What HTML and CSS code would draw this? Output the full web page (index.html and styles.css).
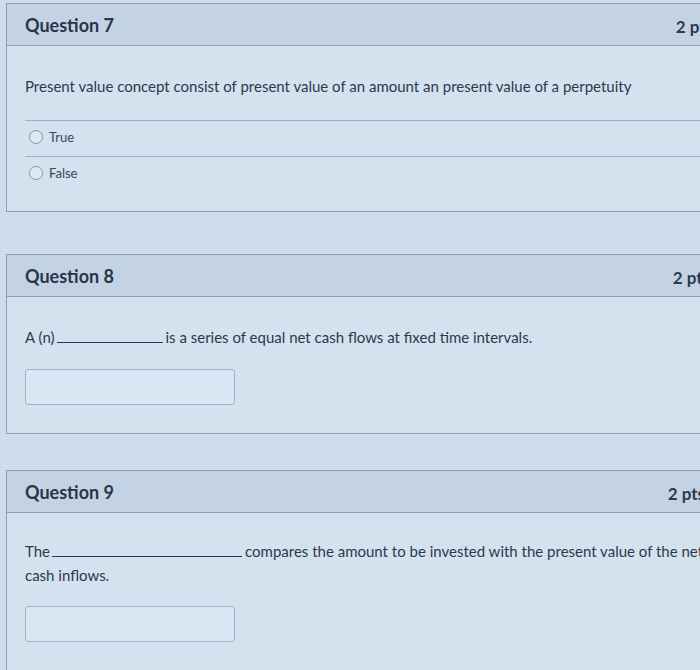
FILE: index.html
```html
<!DOCTYPE html>
<html lang="en">
<head>
<meta charset="utf-8">
<title>Quiz</title>
<link rel="stylesheet" href="styles.css">
</head>
<body>
<div class="page">
  <section class="question q7">
    <header class="q-header">
      <h2 class="q-title">Question 7</h2>
      <span class="q-pts">2 pts</span>
    </header>
    <div class="q-body">
      <p class="q-text">Present value concept consist of present value of an amount an present value of a perpetuity</p>
      <div class="answers">
        <label class="answer"><span class="radio"></span>True</label>
        <label class="answer"><span class="radio"></span>False</label>
      </div>
    </div>
  </section>

  <section class="question q8">
    <header class="q-header">
      <h2 class="q-title">Question 8</h2>
      <span class="q-pts">2 pts</span>
    </header>
    <div class="q-body">
      <p class="q-text">A (n)<span class="blank blank-short"></span>is a series of equal net cash flows at fixed time intervals.</p>
      <div class="input-box"></div>
    </div>
  </section>

  <section class="question q9">
    <header class="q-header">
      <h2 class="q-title">Question 9</h2>
      <span class="q-pts">2 pts</span>
    </header>
    <div class="q-body">
      <p class="q-text tall">The<span class="blank blank-long"></span>compares the amount to be invested with the present value of the net<br>cash inflows.</p>
      <div class="input-box"></div>
    </div>
  </section>
</div>
</body>
</html>
```
FILE: styles.css
```css
html, body {
  margin: 0;
  padding: 0;
}
body {
  background: #cedcec;
  font-family: Lato, "Open Sans", sans-serif;
  color: #2c394c;
  overflow: hidden;
  width: 700px;
  height: 670px;
}
.page {
  padding-top: 3px;
  padding-left: 6px;
  width: 724px;
}
.question {
  border: 1px solid #8d9db2;
  background: #d4e1ef;
}
.q8 { margin-top: 42px; }
.q9 { margin-top: 36px; }
.q-header {
  height: 42px;
  display: flex;
  align-items: center;
  justify-content: space-between;
  padding: 0 16px 0 18px;
  background: #c4d3e4;
  border-bottom: 1px solid #8d9db2;
  box-sizing: border-box;
}
.q8 .q-header { padding-right: 19px; }
.q9 .q-header { padding-right: 24px; }
.q-title {
  margin: 0;
  font-size: 18px;
  font-weight: 700;
  color: #28354a;
}
.q-pts {
  font-size: 17px;
  font-weight: 700;
  color: #2c394c;
  padding-top: 4px;
}
.q-body {
  padding: 30px 0 28px 18px;
}
.q7 .q-body { padding-bottom: 20px; }
.q9 .q-body { padding-top: 26px; }
.q-text {
  margin: 0;
  font-size: 15px;
  line-height: 20px;
}
.q-text.tall { line-height: 24px; }
.answers {
  margin-top: 24px;
  border-top: 1px solid #9fafc2;
}
.answer {
  display: flex;
  align-items: center;
  height: 35px;
  padding-left: 4px;
  padding-bottom: 3px;
  box-sizing: border-box;
  font-size: 13px;
  color: #3a4759;
}
.answer + .answer {
  border-top: 1px solid #9fafc2;
}
.radio {
  width: 12px;
  height: 12px;
  border: 1px solid #8797ab;
  border-radius: 50%;
  background: #dfe8f2;
  margin-right: 6px;
}
.blank {
  display: inline-block;
  border-bottom: 1px solid #2c394c;
  height: 14px;
  vertical-align: baseline;
  margin: 0 3px 0 2px;
}
.blank-short { width: 106px; }
.blank-long { width: 190px; margin-left: 2px; }
.input-box {
  margin-top: 22px;
  width: 208px;
  height: 34px;
  border: 1px solid #a2b2c4;
  border-radius: 3px;
  background: #dae6f3;
}
.q9 .input-box { margin-top: 19px; }
```
